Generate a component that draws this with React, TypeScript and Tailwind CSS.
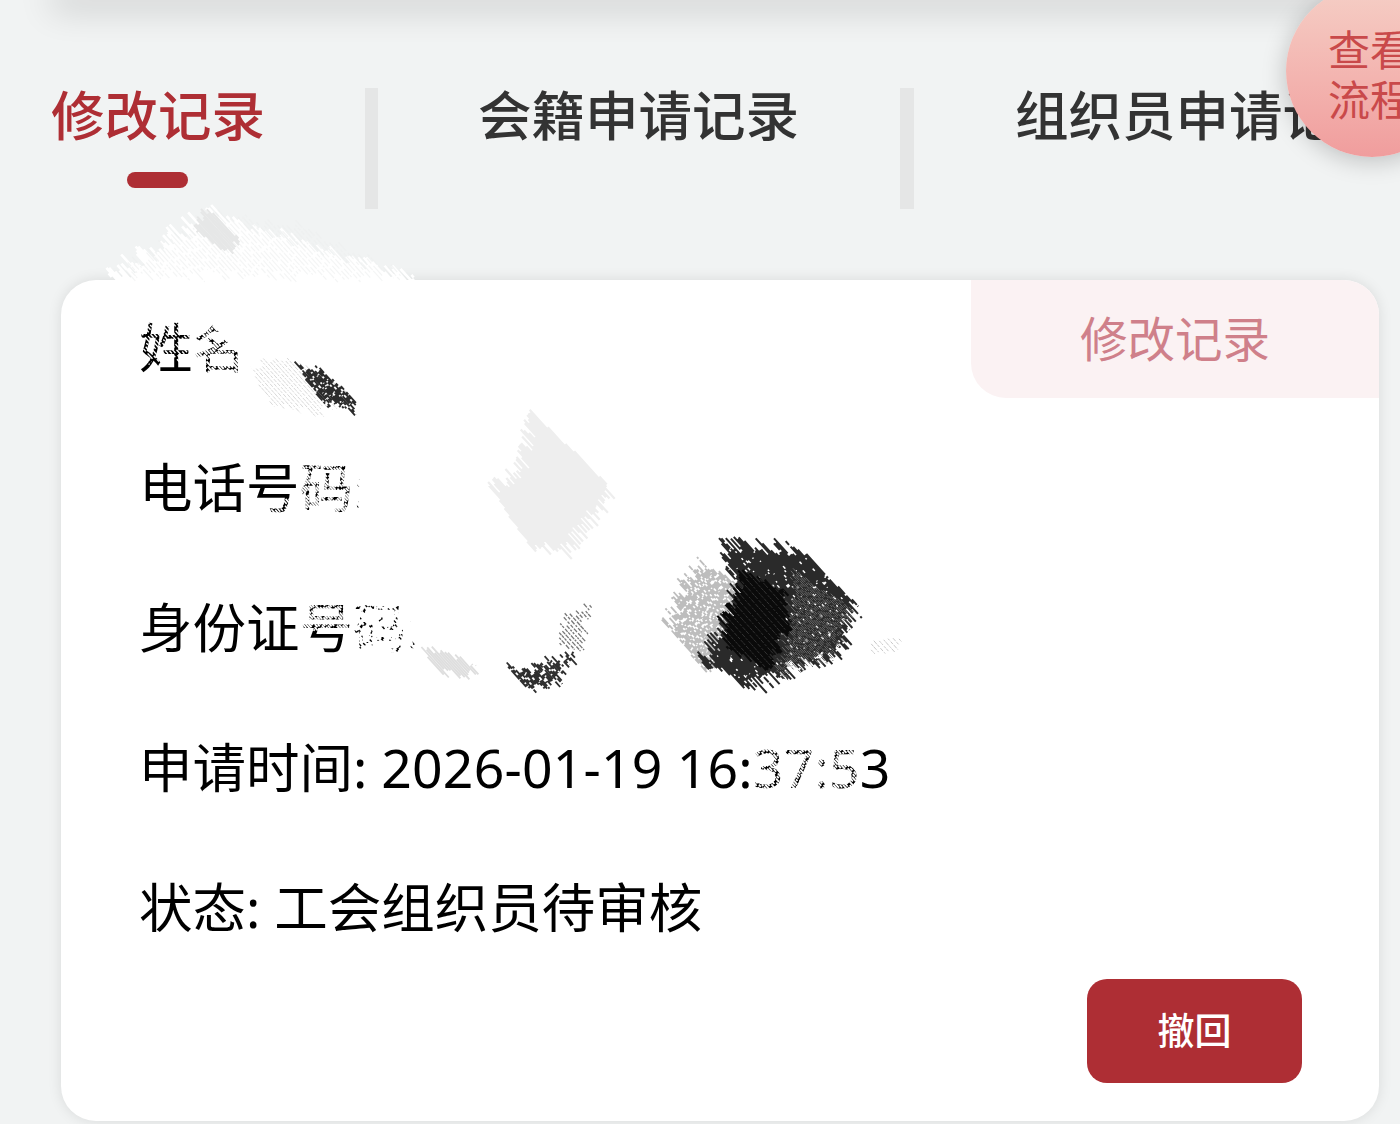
import React from "react";

type P = [number, number];

function rng(seed: number) {
  let s = seed;
  return () => {
    s = (s * 1664525 + 1013904223) % 4294967296;
    return s / 4294967296;
  };
}

function Hatch({ poly, color, seed, step = 2.4, jag = 12, w = 2.2, angle = 48, gaps = 0, opacity = 1 }: {
  poly: P[]; color: string; seed: number; step?: number; jag?: number; w?: number; angle?: number; gaps?: number; opacity?: number;
}) {
  const r = rng(seed);
  const a = (angle * Math.PI) / 180;
  const dx = Math.cos(a), dy = Math.sin(a);
  const nx = -dy, ny = dx;
  const offs = poly.map(([x, y]) => x * nx + y * ny);
  const min = Math.min(...offs), max = Math.max(...offs);
  let d = "";
  for (let o = min; o <= max; o += step) {
    const ts: number[] = [];
    poly.forEach((p, i) => {
      const q = poly[(i + 1) % poly.length];
      const o1 = p[0] * nx + p[1] * ny, o2 = q[0] * nx + q[1] * ny;
      if ((o1 - o) * (o2 - o) <= 0 && o1 !== o2) {
        const f = (o - o1) / (o2 - o1);
        ts.push((p[0] + f * (q[0] - p[0])) * dx + (p[1] + f * (q[1] - p[1])) * dy);
      }
    });
    if (ts.length < 2) continue;
    const t0 = Math.min(...ts) + (r() - 0.5) * jag;
    const t1 = Math.max(...ts) + (r() - 0.5) * jag;
    let t = t0;
    while (t < t1) {
      const seg = gaps > 0 ? 2 + r() * gaps : t1 - t;
      const e = Math.min(t + seg, t1);
      d += `M${(o * nx + t * dx).toFixed(1)} ${(o * ny + t * dy).toFixed(1)}L${(o * nx + e * dx).toFixed(1)} ${(o * ny + e * dy).toFixed(1)}`;
      t = e + (gaps > 0 ? 0.6 + r() * Math.min(gaps, 8) * 0.4 : 0);
    }
  }
  return <path d={d} stroke={color} strokeWidth={w} fill="none" opacity={opacity} />;
}

function Scribble() {
  return (
    <svg className="absolute left-0 top-0 pointer-events-none" width={1400} height={1124} viewBox="0 0 1400 1124">
      {/* white smear */}
      <Hatch seed={1} color="#ffffff" step={2} jag={26} w={2.6}
        poly={[[212, 212], [108, 278], [228, 322], [262, 378], [420, 460], [500, 420], [416, 280]]} />
      <Hatch seed={20} color="#ffffff" step={2} jag={14} w={2.6}
        poly={[[360, 440], [500, 420], [590, 610], [500, 690], [412, 655], [408, 600], [356, 515]]} />
      <Hatch seed={2} color="#eceeee" step={3.4} jag={18} w={1.2} gaps={14} opacity={0.6}
        poly={[[212, 214], [116, 276], [410, 276], [300, 226]]} />
      <Hatch seed={3} color="#e6e7e7" step={2} jag={14} w={2}
        poly={[[210, 208], [238, 238], [226, 254], [194, 228]]} />
      {/* fade over the first label */}
      <Hatch seed={4} color="#ffffff" step={3} jag={8} w={1.4} gaps={6}
        poly={[[138, 322], [196, 322], [196, 362], [138, 362]]} />
      <Hatch seed={5} color="#ffffff" step={2.6} jag={6} w={2} gaps={6}
        poly={[[196, 322], [262, 322], [262, 378], [196, 378]]} />
      <Hatch seed={6} color="#ffffff" step={2.2} jag={6} w={1.8} gaps={7}
        poly={[[300, 462], [352, 462], [352, 515], [300, 515]]} />
      <Hatch seed={22} color="#ffffff" step={2.5} jag={4} w={1.6} gaps={5}
        poly={[[270, 500], [300, 500], [300, 515], [270, 515]]} />
      <Hatch seed={7} color="#ffffff" step={2.2} jag={6} w={1.8} gaps={7}
        poly={[[300, 603], [352, 603], [352, 630], [300, 630]]} />
      <Hatch seed={23} color="#ffffff" step={1.8} jag={6} w={2.2} gaps={10}
        poly={[[352, 603], [412, 603], [412, 655], [352, 655]]} />
      {/* dusting and dark patch, first row */}
      <Hatch seed={8} color="#9d9d9d" step={3} jag={12} w={1} gaps={3} opacity={0.4}
        poly={[[250, 366], [290, 358], [350, 392], [320, 414], [270, 405]]} />
      <Hatch seed={9} color="#2b2b2b" step={1.8} jag={16} w={1.8} gaps={12}
        poly={[[296, 365], [318, 368], [360, 402], [350, 412], [325, 406]]} />
      {/* pale patch */}
      <Hatch seed={10} color="#eeeeee" step={1.8} jag={20} w={2.2}
        poly={[[532, 412], [614, 490], [566, 552], [530, 545], [492, 490], [522, 465]]} />
      {/* lower smear */}
      <Hatch seed={11} color="#dedede" step={2} jag={14} w={1.8}
        poly={[[420, 648], [445, 652], [478, 668], [468, 678], [440, 672]]} />
      <Hatch seed={12} color="#2f2f2f" step={1.8} jag={16} w={1.8} gaps={12}
        poly={[[505, 665], [520, 672], [562, 655], [575, 655], [550, 690], [530, 692]]} />
      <Hatch seed={13} color="#555555" step={3.4} jag={14} w={1.3} gaps={3} opacity={0.8}
        poly={[[562, 612], [592, 608], [578, 650], [562, 650]]} />
      {/* dark patch */}
      <Hatch seed={14} color="#bdbdbd" step={1.7} jag={20} w={1.8} gaps={10}
        poly={[[702, 562], [745, 590], [730, 650], [706, 672], [668, 628], [680, 590]]} />
      <Hatch seed={15} color="#2a2a2a" step={1.7} jag={24} w={2} gaps={60}
        poly={[[722, 544], [800, 548], [856, 604], [838, 652], [752, 688], [702, 662], [728, 620], [736, 586]]} />
      <Hatch seed={16} color="#6a6a6a" step={1.6} jag={16} w={1} gaps={6}
        poly={[[795, 570], [852, 610], [830, 655], [775, 678], [790, 630]]} />
      <Hatch seed={17} color="#0a0a0a" step={1.7} jag={16} w={2.1}
        poly={[[745, 572], [785, 592], [790, 625], [770, 668], [730, 652], [722, 620], [735, 600]]} />
      <Hatch seed={24} color="#444444" step={5} jag={8} w={1} gaps={3} opacity={0.7}
        poly={[[745, 572], [785, 592], [790, 625], [770, 668], [730, 652], [722, 620], [735, 600]]} />
      <Hatch seed={18} color="#8f8f8f" step={4} jag={6} w={1} gaps={3} opacity={0.5}
        poly={[[870, 640], [900, 640], [900, 652], [870, 652]]} />
      {/* fade over the clock */}
      <Hatch seed={19} color="#ffffff" step={2.4} jag={6} w={1.8} gaps={5}
        poly={[[752, 745], [862, 745], [862, 795], [752, 795]]} />
    </svg>
  );
}

const font = "font-['Noto_Sans','Noto_Sans_CJK_SC',sans-serif]";

function Row({ children }: { children: React.ReactNode }) {
  return <div className="h-[140px] pb-[3px] flex items-center text-[53.5px] text-black whitespace-pre">{children}</div>;
}

export default function App() {
  return (
    <div className={`${font} relative w-[1400px] h-[1124px] overflow-hidden bg-[#f1f3f3]`}>
      <div className="mx-[61px] h-px -mt-px shadow-[0_0_34px_10px_rgba(0,0,0,0.16)]" />

      <div className="flex mt-[88px] h-[121px] w-[1600px] text-[53.5px] font-medium leading-[56px] text-[#333333]">
        <div className="flex flex-col items-center pl-[51px] pr-[100px] border-r-[13px] border-[#e5e6e6]">
          <span className="text-[#ae2e34]">修改记录</span>
          <span className="mt-[28px] -ml-[2px] w-[61px] h-[16px] rounded-full bg-[#ae2e34]" />
        </div>
        <div className="pl-[100px] pr-[101px] border-r-[14px] border-[#e5e6e6]">会籍申请记录</div>
        <div className="pl-[101px]">组织员申请记录</div>
      </div>

      <div className="relative mt-[71px] ml-[61px] mr-[21px] h-[841px] rounded-[35px] bg-white pl-[78px] shadow-[0_0_14px_rgba(0,0,0,0.1)]">
        <div className="absolute right-0 top-0 w-[408px] h-[118px] flex items-center justify-center rounded-tr-[35px] rounded-bl-[35px] bg-[#fbf2f3] text-[47.5px] text-[#cf808a]">
          修改记录
        </div>
        <Row>姓名:</Row>
        <Row>电话号码:</Row>
        <Row>身份证号码:</Row>
        <Row>申请时间: <span className="tracking-[0.2px]">2026-01-19 16:37:53</span></Row>
        <Row>状态: 工会组织员待审核</Row>
        <div className="flex justify-end pr-[77px]">
          <button className="w-[215px] h-[104px] -mt-px rounded-[20px] bg-[#ae2e34] text-white text-[37px] font-medium">撤回</button>
        </div>
      </div>

      <Scribble />

      <div className="absolute left-[1286px] top-[-15px] w-[172px] h-[172px] rounded-full bg-gradient-to-b from-[#f5cfc6] to-[#f09d9d] shadow-[0_4px_24px_rgba(0,0,0,0.22)] pl-[42px] pt-[40px] text-[42px] leading-[50px] text-[#c9494a]">
        <div className="w-[120px]">查看</div>
        <div className="w-[120px]">流程</div>
      </div>
    </div>
  );
}
